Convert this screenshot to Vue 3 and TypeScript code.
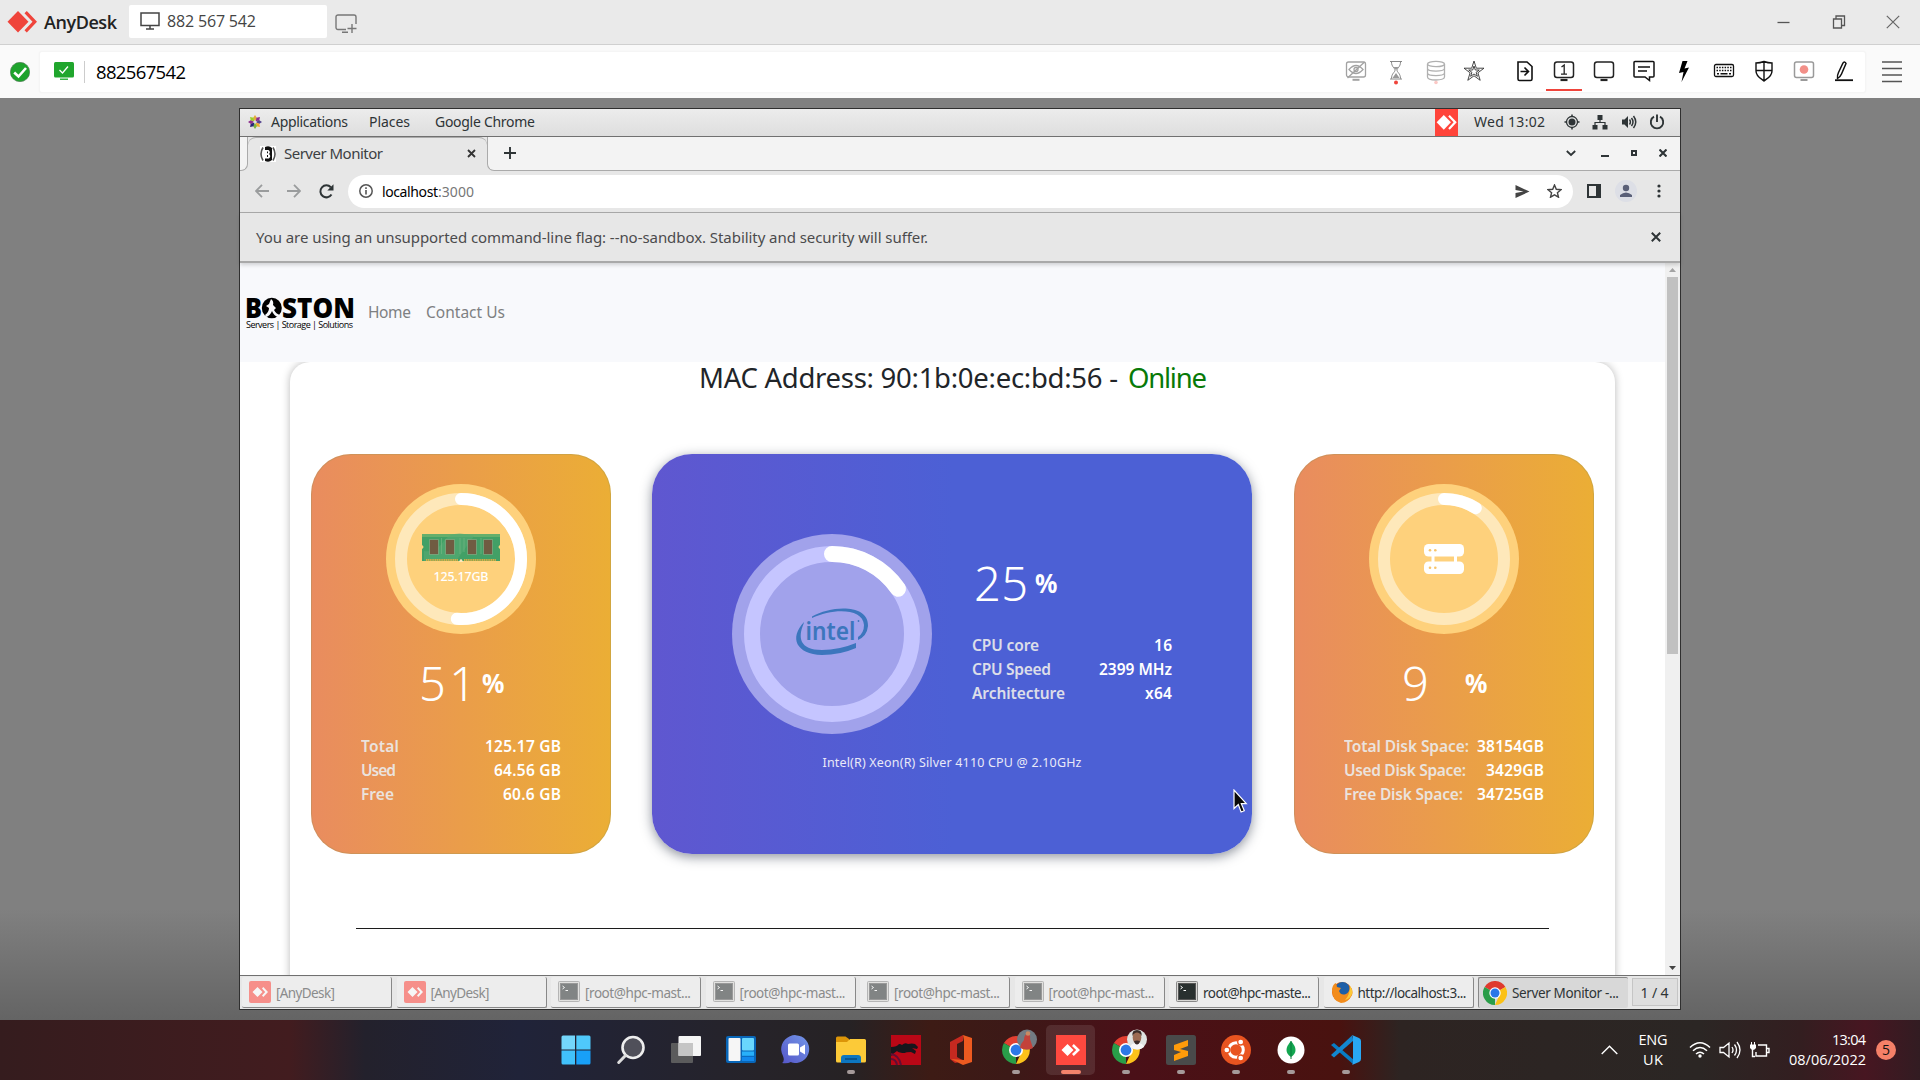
<script setup lang="ts">
interface Row { label: string; value: string; lw: number; vw: number }

// Stretches or tightens letter spacing so a label takes the given width.
const vFit = {
  mounted(el: HTMLElement, binding: { value: number }) {
    const chars = (el.textContent ?? '').length
    const natural = el.getBoundingClientRect().width
    if (chars < 2 || !binding.value) return
    const spacing = (binding.value - natural) / (chars - 1)
    el.style.letterSpacing = `${spacing}px`
    el.style.marginRight = `${-spacing}px`
  },
}

const memory: Row[] = [
  { label: 'Total', value: '125.17 GB', lw: 38, vw: 76 },
  { label: 'Used', value: '64.56 GB', lw: 35, vw: 67 },
  { label: 'Free', value: '60.6 GB', lw: 33, vw: 58 },
]
const cpu: Row[] = [
  { label: 'CPU core', value: '16', lw: 67, vw: 18 },
  { label: 'CPU Speed', value: '2399 MHz', lw: 79, vw: 73 },
  { label: 'Architecture', value: 'x64', lw: 93, vw: 27 },
]
const disk: Row[] = [
  { label: 'Total Disk Space:', value: '38154GB', lw: 125, vw: 67 },
  { label: 'Used Disk Space:', value: '3429GB', lw: 122, vw: 58 },
  { label: 'Free Disk Space:', value: '34725GB', lw: 119, vw: 67 },
]

const arc = (r: number, c: number, deg: number): string => {
  const a = (deg * Math.PI) / 180
  return `M${c} ${c - r}A${r} ${r} 0 ${deg > 180 ? 1 : 0} 1 ${c + r * Math.sin(a)} ${c - r * Math.cos(a)}`
}

const tasks = [
  { icon: 'any', text: '[AnyDesk]', dim: true, w: 59 },
  { icon: 'any', text: '[AnyDesk]', dim: true, w: 59 },
  { icon: 'term', text: '[root@hpc-mast...', dim: true, w: 106 },
  { icon: 'term', text: '[root@hpc-mast...', dim: true, w: 106 },
  { icon: 'term', text: '[root@hpc-mast...', dim: true, w: 106 },
  { icon: 'term', text: '[root@hpc-mast...', dim: true, w: 106 },
  { icon: 'term', text: 'root@hpc-maste...', dim: false, w: 108 },
  { icon: 'fox', text: 'http://localhost:3...', dim: false, w: 109 },
  { icon: 'chrome', text: 'Server Monitor -...', dim: false, w: 107, active: true },
]

const dock = ['start', 'search', 'views', 'widgets', 'chat', 'folder', 'dragon', 'office', 'chromeA', 'anydesk', 'chromeB', 'sublime', 'ubuntu', 'mongo', 'code']
const running = ['folder', 'chromeA', 'chromeB', 'sublime', 'ubuntu', 'mongo', 'code']
const petals = [0, 45, 90, 135, 180, 225, 270, 315]
const petalColors = ['#e6a93c', '#8d2f8d', '#56458f', '#f0a92e', '#7cb342', '#262577', '#8d2f8d', '#9ccd2a']
</script>

<template>
  <div class="screen">
    <header class="titlebar">
      <svg class="ad-logo" width="30" height="22" viewBox="0 0 30 22"><path d="M11 0 21.5 10.8 11 21.600 .5 10.8z" fill="#ef443b" /><path d="M17.500 2.300 19.800 0 30 10.800 19.800 21.600l-2.300-2.300 8-8.500z" fill="#ef443b" /></svg>
      <span v-fit="73" class="brand">AnyDesk</span>
      <div class="adtab">
        <svg width="20" height="18" viewBox="0 0 20 18" fill="none" stroke="#444"><path d="M1 1h18v12.500H1z" stroke-width="1.500" /><path d="M10 14v2.500M6 17h8" stroke-width="1.500" /></svg>
        <span v-fit="89">882 567 542</span>
      </div>
      <svg class="addmon" width="22" height="20" viewBox="0 0 22 20" fill="none" stroke="#777" stroke-width="1.400"><path d="M11 15.500H3a2 2 0 0 1-2-2V3a2 2 0 0 1 2-2h16a2 2 0 0 1 2 2v7M7 18.200h6M17 10v9M12.500 14.500h9" /></svg>
      <div class="winctl">
        <svg width="13" height="14" viewBox="0 0 13 14"><path d="M.5 7.500h12" stroke="#555" stroke-width="1.300" /></svg>
        <svg width="14" height="14" viewBox="0 0 14 14" fill="none" stroke="#555" stroke-width="1.300"><path d="M1.500 4h8v9h-8zM4 4V1h8.500v9.500h-3" /></svg>
        <svg width="14" height="14" viewBox="0 0 14 14"><path d="m.8.8 12.400 12.400M13.200.8.800 13.200" stroke="#666" stroke-width="1.200" /></svg>
      </div>
    </header>

    <div class="adbar">
      <svg class="okay" width="20" height="20" viewBox="0 0 20 20"><circle cx="10" cy="10" r="9.700" fill="#1ea32d" stroke="#4c7450" stroke-width=".6" /><path d="m4.200 10.500 4.300 4L16 6" fill="none" stroke="#fff" stroke-width="2.600" /></svg>
      <div class="adinput">
        <svg class="gmon" width="20" height="19" viewBox="0 0 20 19"><rect width="20" height="15.500" rx="1.500" fill="#20a62d" /><path d="M6 16.500h8v1.500H6z" fill="#35b543" /><path d="m5.500 8 3 3 5.500-6.500" fill="none" stroke="#fff" stroke-width="1.300" /></svg>
        <i class="sep" />
        <span v-fit="90" class="adnum">882567542</span>
        <div class="tools">
          <svg viewBox="0 0 24 24" stroke="#a2a2a2" stroke-width="1.300"><rect x="2.500" y="3" width="19" height="15" rx="2" /><path d="M8.500 20.800h7" stroke-width="2" /><path d="M5 10.500q7-8 14 0-7 8-14 0zM3.500 19 20.500 3" /><circle cx="12" cy="10.500" r="2" /></svg>
          <svg viewBox="0 0 24 24" stroke="#888"><path d="M6 2.500h12M6 20h12M7.500 3c0 5 3.500 6 3.500 8.200s-3.500 3-3.500 8.500M16.500 3c0 5-3.500 6-3.500 8.200s3.500 3 3.500 8.500" /><path d="m8.500 19 3.500-5 3.500 5zM9.500 8h5L12 11z" fill="#999" stroke="none" /><circle cx="12" cy="23.500" r="2" fill="#ef443b" stroke="none" /></svg>
          <svg viewBox="0 0 24 24" stroke="#b0b0b0" stroke-width="1.300"><ellipse cx="12" cy="5" rx="8.500" ry="2.700" /><path d="M3.500 5v13c0 4 17 4 17 0V5M3.500 9.500c0 3.500 17 3.500 17 0M3.500 14c0 3.500 17 3.500 17 0" /><circle cx="12" cy="23.500" r="1.800" fill="#fbc8c5" stroke="none" /></svg>
          <svg class="star" viewBox="0 0 24 24" stroke="#333" stroke-width=".9"><path d="m12 2 2.300 7.200H22l-6.100 4.600 2.300 7.500L12 16.800l-6.200 4.500 2.300-7.500L2 9.200h7.700z" /><path d="m12 7 1.300 4h4l-3.200 2.300 1.300 4L12 15l-3.400 2.300 1.300-4L6.700 11h4z" /></svg>
          <svg class="gap" viewBox="0 0 24 24" stroke="#111" stroke-width="1.600"><path d="M5 3h9l5 4.500V20a1.500 1.500 0 0 1-1.500 1.500h-11A1.500 1.500 0 0 1 5 20zM7.500 12.500H15m-3.500-4 4 4-4 4" /></svg>
          <span class="mon1"><svg viewBox="0 0 24 24" stroke="#222" stroke-width="1.500"><rect x="2.500" y="3" width="19" height="15.500" rx="2.500" /><path d="M8.500 21h7" stroke-width="2.200" /><path d="m9.500 8 2.700-2v9.500M9 15.200h6" stroke-width="1.300" /></svg></span>
          <svg viewBox="0 0 24 24" stroke="#222" stroke-width="1.500"><rect x="2.500" y="3" width="19" height="15.500" rx="2.500" /><path d="M8.500 21h7" stroke-width="2.200" /></svg>
          <svg viewBox="0 0 24 24" stroke="#111" stroke-width="1.500"><path d="M3 2.500h18a1 1 0 0 1 1 1V17a1 1 0 0 1-1 1h-3.500v3.500L13 18H3a1 1 0 0 1-1-1V3.500a1 1 0 0 1 1-1zM6 8h12M6 12h9" /></svg>
          <svg viewBox="0 0 24 24"><path d="M10.500 2h5l-3 7.500 4.500-1L9.500 23l2-10-4.500 1z" fill="#000" /></svg>
          <svg viewBox="0 0 24 24" stroke="#111" stroke-width="1.300"><rect x="2.500" y="5.500" width="19" height="12" rx="1.500" /><path d="M4.500 8.500h15M4.500 11.500h15" stroke-dasharray="1.500 1.200" stroke-width="1.600" /><path d="M5 14.700h2m1.500 0h7m1.500 0h2" stroke-width="1.500" /></svg>
          <svg viewBox="0 0 24 24" stroke="#111" stroke-width="1.400"><path d="M4 4q4 0 8-1.500Q16 4 20 4v8c0 6-6 8-8 10-2-2-8-4-8-10zM12 2.500V22M4 11.500h16" /></svg>
          <svg viewBox="0 0 24 24" stroke="#9a9a9a" stroke-width="1.500"><rect x="2.500" y="3" width="19" height="15.500" rx="2" /><path d="M8.500 21h7" stroke-width="2" /><circle cx="12" cy="10.500" r="4.300" fill="#f28f88" stroke="none" /></svg>
          <svg viewBox="0 0 24 24" stroke="#111" stroke-width="1.500"><path d="M3 21.200h18" stroke-width="1.800" /><path d="M5.500 19.500q-.5-3 1-6L11 4q2-2 3 .5L9.500 15q-1 2.500-4 4.500z" /></svg>
        </div>
      </div>
      <svg class="burger" width="20" height="22" viewBox="0 0 20 22"><path d="M0 1h20M0 7.500h20M0 14h20M0 20.500h20" stroke="#555" stroke-width="1.500" /></svg>
    </div>

    <main class="desk">
      <div class="remote">
        <div class="gpanel">
          <svg class="centos" width="14" height="14" viewBox="-7 -7 14 14"><path v-for="(p, i) in petals" :key="p" d="M0-1 2-4 0-7-2-4z" :fill="petalColors[i]" :transform="`rotate(${p})`" /></svg>
          <span v-fit="77" class="m1">Applications</span>
          <span v-fit="41" class="m2">Places</span>
          <span v-fit="100" class="m3">Google Chrome</span>
          <div class="gright">
            <div class="redbox"><svg width="21" height="15" viewBox="0 0 30 22" fill="#fff"><path d="M11 0 21.500 10.800 11 21.600.500 10.800z" /><path d="m17.500 2.300 2.300-2.300L30 10.800 19.800 21.600l-2.300-2.300 8-8.500z" /></svg></div>
            <span v-fit="71" class="clock">Wed 13:02</span>
            <svg class="target" width="16" height="16" viewBox="0 0 16 16"><circle cx="8" cy="8" r="5.500" fill="none" stroke="#2e3436" stroke-width="1.300" /><circle cx="8" cy="8" r="3.500" fill="#2e3436" /><path d="M8 .5V3m0 10v2.500M.5 8H3m10 0h2.500" stroke="#2e3436" stroke-width="1.500" /></svg>
            <svg width="16" height="16" viewBox="0 0 16 16" fill="#2e3436"><path d="M5.500 1h5v5h-5zM.5 11h5v4.500h-5zm10 0h5v4.500h-5z" /><path d="M8 6v2.500M3 11V8.500h10V11" fill="none" stroke="#2e3436" stroke-width="1.200" /></svg>
            <svg width="16" height="16" viewBox="0 0 16 16"><path d="M1 5.500h2.500L7 2v12l-3.500-3.500H1z" fill="#2e3436" /><path d="M8.500 5.500q1.800 2.500 0 5M10.500 4q3 4 0 8M12.500 2q4.500 6 0 12" fill="none" stroke="#2e3436" stroke-width="1.500" /></svg>
            <svg width="16" height="16" viewBox="0 0 16 16" fill="none" stroke="#2e3436" stroke-width="1.900"><path d="M5 2.700a6.200 6.200 0 1 0 6 0M8 .500V8" /></svg>
          </div>
        </div>

        <div class="tabstrip">
          <i class="stub" />
          <div class="tab">
            <svg class="fav" width="16" height="16" viewBox="0 0 16 16"><rect width="16" height="16" fill="#fff" /><path d="M3 1.500Q-1 8 3 14.500M13 1.500q4 6.500 0 13" fill="none" stroke="#555" stroke-width="1.600" /><path d="M5 1q4-2 7 1v12q-3 3-7 1z" fill="#111" /><path d="M5 4h3.500q2.500 2 .5 4 2.500 2 0 4.500H5zM7 5.500v1.700h1V5.500zM7 9v2h1V9z" fill="#fff" fill-rule="evenodd" /></svg>
            <span v-fit="99">Server Monitor</span>
            <svg class="tx" width="9" height="9" viewBox="0 0 9 9"><path d="m1 1 7 7M8 1 1 8" stroke="#333" stroke-width="1.800" /></svg>
          </div>
          <div class="strip">
            <svg class="plus" width="12" height="12" viewBox="0 0 12 12"><path d="M6 0v12M0 6h12" stroke="#2e3436" stroke-width="1.900" /></svg>
            <div class="chctl">
              <svg width="10" height="10" viewBox="0 0 10 10"><path d="m.8 3 4.200 4 4.200-4" fill="none" stroke="#2e3436" stroke-width="1.800" /></svg>
              <svg width="8" height="10" viewBox="0 0 8 10"><path d="M0 8h8" stroke="#2e3436" stroke-width="2" /></svg>
              <svg width="6" height="6" viewBox="0 0 6 6"><path d="M1 1h4v4H1z" fill="none" stroke="#2e3436" stroke-width="2" /></svg>
              <svg width="8" height="8" viewBox="0 0 8 8"><path d="m.500.500 7 7M7.500.500l-7 7" stroke="#2e3436" stroke-width="2.100" /></svg>
            </div>
          </div>
        </div>

        <div class="chbar">
          <svg width="14" height="14" viewBox="0 0 14 14" fill="none" stroke="#9a9c9d" stroke-width="1.800"><path d="M14 7H1.500M7 .8.9 7 7 13.200" /></svg>
          <svg width="14" height="14" viewBox="0 0 14 14" fill="none" stroke="#9a9c9d" stroke-width="1.800"><path d="M0 7h12.500M7 .8 13.100 7 7 13.200" /></svg>
          <svg width="15" height="15" viewBox="0 0 15 15"><path d="M12.500 10.500A6 6 0 1 1 11.800 3.300" fill="none" stroke="#2e3436" stroke-width="2" /><path d="M14.500.300v6.300H8.300z" fill="#2e3436" /></svg>
          <div class="url">
            <svg width="14" height="14" viewBox="0 0 14 14"><circle cx="7" cy="7" r="6.200" fill="none" stroke="#555" stroke-width="1.500" /><path d="M7 6v4.500M7 3.200V5" stroke="#555" stroke-width="1.600" /></svg>
            <span v-fit="56" class="host">localhost</span><span v-fit="36" class="port">:3000</span>
            <svg class="send" width="15" height="13" viewBox="0 0 15 13"><path d="M.500 0 14.500 6.500.500 13V8l8-1.500-8-1.500z" fill="#444" /></svg>
            <svg class="st" width="15" height="14" viewBox="0 0 15 14"><path d="m7.500 1 1.800 4.300 4.700.4-3.600 3 1.100 4.500-4-2.400-4 2.400 1.100-4.500-3.600-3 4.700-.400z" fill="none" stroke="#444" stroke-width="1.400" /></svg>
          </div>
          <svg class="side" width="14" height="14" viewBox="0 0 14 14"><path d="M0 0h14v14H0zM2 2v10h7V2z" fill="#2e3436" fill-rule="evenodd" /></svg>
          <svg class="prof" width="22" height="22" viewBox="0 0 22 22"><circle cx="11" cy="11" r="11" fill="#dddfe6" /><circle cx="11" cy="8" r="3.200" fill="#5a6078" /><path d="M5 17v-2q6-5 12 0v2z" fill="#5a6078" /></svg>
          <svg class="kebab" width="4" height="14" viewBox="0 0 4 14" fill="#2e3436"><circle cx="2" cy="2" r="1.600" /><circle cx="2" cy="7" r="1.600" /><circle cx="2" cy="12" r="1.600" /></svg>
        </div>

        <div class="info">
          <span v-fit="672">You are using an unsupported command-line flag: --no-sandbox. Stability and security will suffer.</span>
          <svg width="10" height="10" viewBox="0 0 10 10"><path d="m.8.8 8.400 8.400M9.200.8.800 9.200" stroke="#2e3436" stroke-width="2" /></svg>
        </div>

        <div class="view">
          <div class="page">
            <nav>
              <div class="logo">
                <svg width="108" height="24" viewBox="0 0 108 24" font-family="Open Sans" font-weight="800" font-size="27.500">
                  <text x="-1" y="21" textLength="17" lengthAdjust="spacingAndGlyphs">B</text>
                  <ellipse cx="25.800" cy="11" rx="10" ry="10.300" /><path d="M25 2q3 2 2 6l3 3-2 2q2 4 6 5l-2 2q-4-1-6-6-2 5-6 6l-1-2q4-3 4-7l-3-2 3-2z" fill="#f8f9fc" />
                  <text x="36" y="21" textLength="73" lengthAdjust="spacingAndGlyphs">STON</text>
                </svg>
                <span v-fit="107" class="tag">Servers | Storage | Solutions</span>
              </div>
              <span v-fit="43" class="home">Home</span>
              <span v-fit="79" class="contact">Contact Us</span>
            </nav>
            <section class="panel">
              <h1><span v-fit="419">MAC Address: 90:1b:0e:ec:bd:56 -</span><span v-fit="79" class="online">Online</span></h1>
              <div class="cards">
                <div class="card warm">
                  <div class="dial">
                    <svg width="150" height="150"><circle cx="75" cy="75" r="75" fill="#fed17c" /><circle cx="75" cy="75" r="60" fill="none" stroke="#fee8ba" stroke-width="12" /><path :d="arc(60, 75, 184)" fill="none" stroke="#fff" stroke-width="12" stroke-linecap="round" />
                      <path d="M36 50h78v11q-3 2 0 4v12H36V65q3-2 0-4z" fill="#42a066" /><path d="M36 50h78v3H36z" fill="#65af6c" /><path d="M38 67q12 2 20-10t30-5L70 77H38z" fill="#56aa73" opacity=".6" />
                      <g fill="#705c42" stroke="#8cc39a" stroke-width=".5"><path d="M43.500 55.500h9v15h-9zM59.500 55.500h9v15h-9zM81.500 55.500h9v15h-9zM97.500 55.500h9v15h-9z" /></g>
                      <path d="M40 76h32m6 0h32" stroke="#d6ad45" stroke-width="2" stroke-dasharray="1.300 .5" /><path d="M73 78q2-6 4 0z" fill="#fee8ba" /><path d="M55.500 54v16M74 54v16m4-16v14m17-14v16" stroke="#79b886" stroke-width=".6" />
                    </svg>
                    <span v-fit="55" class="ramtext">125.17GB</span>
                  </div>
                  <div class="num"><i><span v-fit="57">51</span></i><b>%</b></div>
                  <ul><li v-for="r in memory" :key="r.label"><span v-fit="r.lw">{{ r.label }}</span><b v-fit="r.vw">{{ r.value }}</b></li></ul>
                </div>
                <div class="card cool">
                  <div class="coolrow">
                    <svg width="200" height="200"><circle cx="100" cy="100" r="100" fill="#a1a2eb" /><circle cx="100" cy="100" r="80" fill="none" stroke="#c5c5ff" stroke-width="16" /><path :d="arc(80, 100, 55.6)" fill="none" stroke="#fff" stroke-width="16" stroke-linecap="round" />
                      <path d="M80 82.500C100 71 137 70 136 92q-1 10-10 14v-3q6-4 6-12C131 74 101 74 80 84z" fill="#3c76bd" />
                      <path d="M72 88C57 104 64 120 90 121q18 0 34-7v-5q-17 7-34 7C67 116 66 103 71.500 90z" fill="#3c76bd" />
                      <text x="73.500" y="105.500" font-size="26" font-weight="600" fill="#3c76bd" font-family="Noto Sans" textLength="50" lengthAdjust="spacingAndGlyphs">intel</text><circle cx="126.500" cy="87" r=".9" fill="#3c76bd" />
                    </svg>
                    <div class="stats">
                      <div class="num"><i><span v-fit="54">25</span></i><b>%</b></div>
                      <ul><li v-for="r in cpu" :key="r.label"><span v-fit="r.lw">{{ r.label }}</span><b v-fit="r.vw">{{ r.value }}</b></li></ul>
                    </div>
                  </div>
                  <span v-fit="259" class="model">Intel(R) Xeon(R) Silver 4110 CPU @ 2.10GHz</span>
                </div>
                <div class="card warm">
                  <div class="dial">
                    <svg width="150" height="150"><circle cx="75" cy="75" r="75" fill="#fed17c" /><circle cx="75" cy="75" r="60" fill="none" stroke="#fee8ba" stroke-width="12" /><path :d="arc(60, 75, 32)" fill="none" stroke="#fff" stroke-width="12" stroke-linecap="round" />
                      <g fill="#fff"><rect x="55" y="60" width="40" height="12.500" rx="4.500" /><rect x="55" y="77.500" width="40" height="12.500" rx="4.500" /><path d="M62.500 72h3v6h-3zm22.500 0h3v6h-3z" /></g>
                      <g fill="#f7c56c"><circle cx="61" cy="66.300" r="1.300" /><circle cx="66.300" cy="66.300" r="1.300" /><circle cx="61" cy="83.700" r="1.300" /><circle cx="66.300" cy="83.700" r="1.300" /></g>
                    </svg>
                  </div>
                  <div class="num"><i><span>9</span></i><b>%</b></div>
                  <ul><li v-for="r in disk" :key="r.label"><span v-fit="r.lw">{{ r.label }}</span><b v-fit="r.vw">{{ r.value }}</b></li></ul>
                </div>
              </div>
              <hr>
            </section>
          </div>
          <div class="scroll">
            <svg width="15" height="13" viewBox="0 0 15 13"><path d="M4 9h7L7.500 5z" fill="#a3a3a3" /></svg>
            <div class="thumb" />
            <svg class="dn" width="15" height="15" viewBox="0 0 15 15"><path d="M4 6h7l-3.500 4z" fill="#444" /></svg>
          </div>
        </div>

        <div class="tasks">
          <div v-for="(t, i) in tasks" :key="i" class="task" :class="{ dim: t.dim, active: t.active }">
            <svg v-if="t.icon === 'any'" width="22" height="22" viewBox="0 0 22 22"><rect width="22" height="22" rx="2" fill="#ff443b" /><path d="m8.500 6 5 5-5 5-5-5zM13 7.500l1.300-1.500L19 11l-4.700 5-1.300-1.500 3.200-3.500z" fill="#fff" /></svg>
            <svg v-else-if="t.icon === 'term'" width="22" height="22" viewBox="0 0 22 22"><rect x=".5" y=".5" width="21" height="20" rx="1" fill="#d8d8d5" stroke="#888" /><rect x="2.500" y="2.500" width="17" height="16" fill="#29302f" stroke="#555" /><path d="m4.500 5 2 1.500-2 1.500M7.500 9.500H10" fill="none" stroke="#fff" /></svg>
            <svg v-else-if="t.icon === 'fox'" width="22" height="22" viewBox="0 0 22 22"><circle cx="11" cy="11" r="10" fill="#e66000" /><circle cx="11.500" cy="8.500" r="7.500" fill="#1d5fa8" /><path d="M1 8Q2 3 5 2l1 4 4 1-2 3q2 5 7 3 5-3 3-9 5 5 3 10-4 8-11 8Q1 20 1 8z" fill="#f28c1c" /><path d="M19 5q3 4 2 8-2 5-7 6 5-5 5-14z" fill="#fcc838" /></svg>
            <svg v-else width="24" height="24" viewBox="0 0 24 24"><path d="M12 12 1.600 6A12 12 0 0 1 22.400 6z" fill="#df3a2e" /><path d="M12 12v12A12 12 0 0 1 1.600 6z" fill="#2a9d48" /><path d="M12 12 22.400 6A12 12 0 0 1 12 24l4-9z" fill="#fbc116" /><circle cx="12" cy="12" r="5.700" fill="#fff" /><circle cx="12" cy="12" r="4.500" fill="#2b77e8" /></svg>
            <span v-fit="t.w">{{ t.text }}</span>
          </div>
          <div class="pager"><span v-fit="28">1 / 4</span></div>
        </div>
      </div>
    </main>

    <footer class="win">
      <div class="dock">
        <div v-for="d in dock" :key="d" class="app" :class="{ on: d === 'anydesk' }">
          <svg width="32" height="32" viewBox="0 0 32 32">
            <g v-if="d === 'start'"><path d="M1.500 3q0-1.500 1.500-1.500h12V15.400H1.500z" fill="#74d6fb" /><path d="M16.300 1.500H29q1.500 0 1.500 1.500v12.400H16.300z" fill="#4fc9fb" /><path d="M1.500 16.600H15v14H3q-1.500 0-1.500-1.500z" fill="#41c1fb" /><path d="M16.300 16.600h14.200v12.500q0 1.500-1.500 1.500H16.300z" fill="#18a0f8" /></g>
            <g v-else-if="d === 'search'" fill="none"><circle cx="18" cy="13.500" r="10.500" fill="#50505a" stroke="#eee" stroke-width="2.600" /><path d="m10.500 21.500-6.800 7" stroke="#ddd" stroke-width="3" stroke-linecap="round" /></g>
            <g v-else-if="d === 'views'"><rect x="1" y="9" width="22" height="20" rx="1" fill="#5b5b5c" /><rect x="8.500" y="2" width="22.500" height="20" rx="1" fill="#f5f5f5" /><path d="M8.500 9H23v13H8.500z" fill="#c5c5c5" /></g>
            <g v-else-if="d === 'widgets'"><rect x="1" y="2" width="30" height="27" rx="2" fill="#0866b8" /><rect x="3.500" y="4" width="12" height="23" rx="1" fill="#f6f6f6" /><rect x="17" y="4" width="12" height="12.500" rx="1" fill="#69d7fd" /><rect x="17" y="17.500" width="12" height="4.300" fill="#28b0fa" /><rect x="17" y="22.800" width="12" height="4.200" fill="#1288ed" /></g>
            <g v-else-if="d === 'chat'"><path d="M2 29q3-2 1-7A14 14 0 1 1 17 29q-5 0-6-1-4 2-9 1z" fill="url(#cg)" /><defs><linearGradient id="cg" x1="1" x2="0" y1="0" y2="1"><stop stop-color="#7397e8" /><stop offset="1" stop-color="#5555c8" /></linearGradient></defs><rect x="8" y="9.500" width="11" height="12" rx="1.500" fill="#fff" /><path d="m20 13.500 5-3v10l-5-3z" fill="#fff" /></g>
            <g v-else-if="d === 'folder'"><path d="M1 4q0-1.500 1.500-1.500h8L14 5v5H1z" fill="#dc9508" /><path d="M1 8h11l3-3h14.500q1.500 0 1.500 1.500V27q0 1.500-1.500 1.500h-27Q1 28.500 1 27z" fill="#fcca38" /><path d="M6 29v-5q0-3 3-3h14q3 0 3 3v5z" fill="#0d76bf" /><path d="M10 25h12" stroke="#064b80" stroke-width="1.500" /></g>
            <g v-else-if="d === 'dragon'"><path d="M1 1h30v30H1z" fill="#b90716" /><path d="M1 13q6 0 8-3 2 0 3 1 3-3 6-1 4-1 7 0l3 3-1 2-5-1 4 3-1 3-4-2q-5 0-6 1-6 0-8-2l-4 3q-1 3-2 1z" fill="#16161c" /><path d="M1 20q8 1 10 11M1 25q5 0 6 6" stroke="#630d34" stroke-width="2" fill="none" /></g>
            <g v-else-if="d === 'office'"><path d="m5 8 13-7v6l-6 3v13l7 4-9 2-5-4z" fill="#c62920" /><path d="M18 1l9 3v24l-9 3-12-6 13 1V7z" fill="#ed5a20" /></g>
            <g v-else-if="d === 'chromeA' || d === 'chromeB'"><g transform="translate(2 2)"><path d="M14 14 1.900 7a14 14 0 0 1 24.200 0z" fill="#e33f31" /><path d="M14 14v14A14 14 0 0 1 1.900 7z" fill="#299e49" /><path d="M14 14 26 7a14 14 0 0 1-12 21l5-11z" fill="#fcc21a" /><circle cx="14" cy="14" r="7" fill="#fff" /><circle cx="14" cy="14" r="5.400" fill="#2c78e8" /></g></g>
            <g v-else-if="d === 'anydesk'"><path d="M1 1h30v30H1z" fill="#ff493f" /><path d="m12.500 10 6 6-6 6-6-6zM17 12l1.800-2 6.200 6-6.200 6-1.800-2 4.200-4z" fill="#fff" /></g>
            <g v-else-if="d === 'sublime'"><rect x="1" y="1" width="30" height="30" rx="2.500" fill="#494a4a" /><path d="m9 11 14-5v6l-8 3 8 2v5L9 27v-6l7-3-7-2z" fill="#ff9b0a" /></g>
            <g v-else-if="d === 'ubuntu'" fill="none"><circle cx="16" cy="16" r="15" fill="#e95420" /><circle cx="16" cy="16" r="7.300" stroke="#fff" stroke-width="3" /><g fill="#fff" stroke="#e95420" stroke-width="1.300"><circle cx="6.800" cy="16" r="3" /><circle cx="20.700" cy="8" r="3" /><circle cx="20.700" cy="24" r="3" /></g></g>
            <g v-else-if="d === 'mongo'"><circle cx="16" cy="16" r="13.500" fill="#fff" /><path d="M16 7q9 10 0 16-9-6 0-16z" fill="#13a650" /><path d="M16 7v18" stroke="#0b7a3c" /></g>
            <g v-else><path d="m1 11 3-2 20 17-1 4z" fill="#087cc4" /><path d="M1 21 22 1.500l1.500 5L4 23.500z" fill="#1387d0" /><path d="m22 1 7 3q2 1 2 3v18q0 2-2 3l-7 3q1-1 1-4V5q0-3-1-4z" fill="#29a8f3" /></g>
          </svg>
          <svg v-if="d === 'chromeA'" class="avatar" width="20" height="21" viewBox="0 0 20 21"><circle cx="10" cy="10.500" r="10" fill="#727b83" /><path d="M3 19q1-5 4-8 0-5 3-6 4 0 3 5l3 9q-6 3-13 0z" fill="#c3423a" /><circle cx="11" cy="4.500" r="2.300" fill="#c98a62" /></svg>
          <svg v-if="d === 'chromeB'" class="avatar" width="20" height="21" viewBox="0 0 20 21"><circle cx="10" cy="10.500" r="10" fill="#dfe3e1" /><path d="M3 18q1-4 7-4t7 4q-6 5-14 0z" fill="#f6f6f6" /><ellipse cx="10" cy="8.500" rx="4.300" ry="6.200" fill="#9c6b52" /><path d="M5.500 7q-1-6 4.500-6t4.500 6Q13 3.500 10 3.500T5.500 7zM7 12q3-1 6 0-1 3.500-3 3.500T7 12z" fill="#3a2c28" /></svg>
          <i v-if="running.includes(d)" class="dot" /><i v-if="d === 'anydesk'" class="dot wide" />
        </div>
      </div>
      <div class="tray">
        <svg class="chev" width="17" height="10" viewBox="0 0 17 10"><path d="m.700 9 7.800-7.800L16.300 9" fill="none" stroke="#fff" stroke-width="1.400" /></svg>
        <div class="lang"><span v-fit="29">ENG</span><span v-fit="20">UK</span></div>
        <svg class="wifi" width="22" height="18" viewBox="0 0 22 18" fill="none" stroke="#fff" stroke-width="1.500"><path d="M1 6.500q10-9.500 20 0M4 9.800q7-6.500 14 0M7 13q4-3.500 8 0" /><circle cx="11" cy="15" r="1.700" fill="#fff" stroke="none" /></svg>
        <svg class="vol" width="22" height="20" viewBox="0 0 22 20" fill="none" stroke="#fff" stroke-width="1.300"><path d="M1 7.500h3.500L10 3v14l-5.500-4.500H1zM13 7q2 3 0 6M15.500 4.500q4 5.500 0 11M18 2q6 8 0 16" /></svg>
        <svg class="bat" width="22" height="18" viewBox="0 0 22 18" fill="none" stroke="#fff" stroke-width="1.400"><path d="M9 4h8.500v11H7V11M3.500 8v7.500H6M17.500 7.500H20v4h-2.500" /><path d="M1 3.500h6V7q-3 4-6 0zM2 1h1v3H2zM5 1h1v3H5z" fill="#fff" stroke="none" /></svg>
        <div class="time"><span v-fit="34">13:04</span><span v-fit="77">08/06/2022</span></div>
        <span class="badge">5</span>
      </div>
    </footer>

    <svg class="cursor" width="17" height="25" viewBox="0 0 17 25"><path d="M1 1v18.500l4.300-4 2.800 7.500 3.200-1.300-3-7h5z" fill="#0a0a0a" stroke="#fff" stroke-width="1.200" /></svg>
  </div>
</template>

<style>
body { margin: 0; overflow: hidden; }
</style>

<style scoped>
* { box-sizing: border-box; }
svg { flex: none; display: block; }
span { white-space: nowrap; }
.screen { width: 1920px; height: 1080px; display: flex; flex-direction: column; position: relative; overflow: hidden; font-family: "Noto Sans", "Open Sans", sans-serif; }
.titlebar { height: 45px; flex: none; display: flex; align-items: center; background: #eaeaea; border-bottom: 1px solid #d0d0d0; padding-left: 7px; font-family: "Open Sans", sans-serif; color: #222; }
.brand { margin-left: 7px; font-size: 18px; font-weight: 600; }
.adtab { margin: 0 0 1px 12px; width: 198px; height: 33px; border-radius: 2px; background: #fff; display: flex; align-items: center; gap: 7px; padding-left: 11px; color: #444; font-size: 16px; }
.adtab svg { margin-top: -2px; }
.adtab span { margin-top: -1px; }
.addmon { margin: 4px 0 0 8px; }
.winctl { margin-left: auto; display: flex; align-items: center; gap: 41px; padding-right: 20px; }
.winctl svg:first-child { margin-right: 1px; }
.winctl svg:nth-child(2) { margin-right: -1px; }
.adbar { height: 53px; flex: none; display: flex; align-items: center; background: #fafafa; padding-left: 10px; }
.adinput { margin: 0 0 0 10px; width: 1825px; height: 40px; background: #fff; box-shadow: 0 0 0 1.500px #f5f5f5; display: flex; align-items: center; padding-left: 14px; border-radius: 2px; }
.sep { width: 1px; height: 22px; background: #ccc; margin: 0 11px 0 10px; }
.adnum { font: 18.500px "Open Sans", sans-serif; color: #000; }
.tools { margin-left: auto; display: flex; height: 40px; }
.tools svg { width: 24px; height: 24px; margin: 7px 8px 0; fill: none; overflow: visible; }
.tools .star { margin-left: 6px; margin-right: 14px; }
.tools .gap { margin-left: 13px; }
.mon1 { height: 39px; box-shadow: inset 0 -2px #ef443b; width: 36px; margin: 0 2px 0 1px; }
.mon1 svg { margin-left: 6px; }
.tools svg:last-child { margin-right: 9px; }
.burger { margin-left: 17px; }
.desk { height: 922px; flex: none; background: linear-gradient(#808080 88%, #646464 100%); padding: 10px 0 0 239px; }
.remote { width: 1442px; height: 902px; border: 1px solid #2f2f2f; background: #fff; display: flex; flex-direction: column; }
.gpanel { height: 28px; flex: none; display: flex; align-items: center; background: linear-gradient(#ececec, #dedede); border-bottom: 1px solid #707070; padding: 0 0 1px 8px; color: #2e3436; font-size: 14px; }
.gpanel span { padding-bottom: 1px; }
.m1 { margin-left: 9px; }
.m2 { margin-left: 21px; }
.m3 { margin-left: 25px; }
.gright { margin-left: auto; display: flex; align-items: center; gap: 12.500px; padding-right: 15px; height: 27px; }
.redbox { width: 23px; height: 27px; background: #ff443a; display: grid; place-items: center; margin: 1px 3px 0 0; }
.target { margin-left: 6px; }
.tabstrip { height: 34px; flex: none; display: flex; background: #e7e7e7; }
.stub { width: 8px; background: #f3f3f3; border-right: 1px solid #aaa; border-bottom: 1px solid #aaa; border-bottom-right-radius: 7px; }
.tab { width: 239px; display: flex; align-items: center; padding: 0 11px 2px 12px; border-top: 1px solid #aaa; border-radius: 8px 8px 0 0; background: #e7e7e7; font-size: 15px; color: #3c4043; }
.tab span { padding-bottom: 1px; }
.fav { margin-right: 8px; }
.tx { margin-left: auto; }
.strip { flex: 1; background: #f3f3f3; border-left: 1px solid #aaa; border-bottom: 1px solid #aaa; border-bottom-left-radius: 7px; display: flex; align-items: center; padding: 0 13px 1px 16px; }
.chctl { margin-left: auto; display: flex; align-items: center; gap: 25px; }
.chctl svg:nth-child(3) { margin: 0 -2px 0 -3px; }
.chctl svg:nth-child(4) { margin-left: -1px; }
.chbar { height: 42px; flex: none; display: flex; align-items: center; gap: 18px; border-bottom: 1px solid #aaa; background: #e7e7e7; padding: 0 0 1px 15px; }
.url { width: 1225px; margin-left: -4px; height: 33px; border-radius: 17px; background: #fff; display: flex; align-items: center; padding: 0 11px; font-size: 14px; }
.host { margin-left: 9px; color: #000; }
.port { color: #777; }
.send { margin-left: auto; margin-right: 17px; }
.side { margin-left: -4px; }
.prof { margin-left: -4px; }
.kebab { margin-left: 2px; }
.info { height: 50px; flex: none; display: flex; align-items: center; justify-content: space-between; background: #e7e7e7; border-bottom: 2px solid #a9a9a9; padding: 0 19px 0 16px; font-size: 15px; color: #4b4b4d; position: relative; box-shadow: 0 2px 4px rgba(0, 0, 0, .16); z-index: 2; }
.view { height: 712px; flex: none; display: flex; }
.page { width: 1425px; overflow: hidden; display: flex; flex-direction: column; }
nav { height: 99px; flex: none; background: #f8f9fc; display: flex; align-items: center; padding: 0 0 2px 6px; font-size: 15.500px; color: #7e8082; position: relative; z-index: 1; }
.logo { width: 108px; height: 36px; display: flex; flex-direction: column; color: #000; margin-top: 7px; }
.logo svg { overflow: visible; }
.tag { font: 9px/10px "Open Sans", sans-serif; align-self: flex-start; margin-top: -1px; }
.home { margin-left: 14px; }
.contact { margin-left: 15px; }
.panel { margin-left: 50px; width: 1325px; height: 760px; flex: none; border-radius: 20px; box-shadow: 0 0 8px rgba(0, 0, 0, .28); }
h1 { margin: 0; height: 92px; padding-left: 409px; font-size: 27.500px; font-weight: 400; line-height: 32px; color: #212529; display: flex; }
.online { color: #087a08; margin-left: 10px; }
.cards { display: flex; padding-left: 21px; gap: 41px; }
.cards > :last-child { margin-left: 1px; }
.card { height: 400px; border-radius: 40px; flex: none; color: #fff; }
.warm { width: 300px; background: linear-gradient(90deg, #e98c5f, #ebae35); padding-top: 30px; box-shadow: inset 0 0 0 1px rgba(150, 150, 90, .3); }
.cool { width: 600px; background: linear-gradient(90deg, #5f57d0, #4c60d5 50%); padding-top: 80px; box-shadow: 0 3px 12px rgba(30, 40, 60, .5); display: flex; flex-direction: column; align-items: center; }
.dial { width: 150px; height: 150px; margin: 0 auto; position: relative; display: flex; justify-content: center; }
.ramtext { position: absolute; top: 85px; font-size: 12.500px; line-height: 16px; font-weight: 500; }
.num { margin: 24px 0 0 108px; height: 50px; display: flex; align-items: center; font-size: 47px; font-weight: 350; line-height: 50px; }
.num i { font-style: normal; width: 57px; flex: none; display: flex; }
.num b { font-size: 27px; font-weight: 700; margin-left: 6px; transform: scaleX(.92); transform-origin: left; }
ul { list-style: none; margin: 26px auto 0; padding: 0; width: 200px; font-size: 15.500px; font-weight: 600; }
li { height: 24px; display: flex; justify-content: space-between; align-items: center; }
li span { color: #ececec; opacity: .9; }
li b { font-weight: 600; }
.coolrow { display: flex; gap: 40px; width: 440px; }
.stats { width: 200px; }
.stats .num { margin: 24px 0 0 2px; }
.stats .num i { width: 55px; }
.stats ul { margin-top: 25px; }
.model { margin-top: 18px; font-size: 12.500px; line-height: 22px; color: #e9e9f8; }
hr { width: 1193px; height: 1px; border: 0; background: #1c1c1c; margin: 74px 0 0 66px; }
.scroll { width: 15px; background: #f0f0f0; display: flex; flex-direction: column; align-items: center; }
.thumb { width: 11px; height: 377px; background: #c1c1c1; margin-top: 1px; }
.dn { margin-top: auto; }
.tasks { height: 34px; flex: none; display: flex; gap: 4.500px; border-top: 1px solid #707070; background: #e7e7e7; padding: 1px 0 1px 2px; }
.task { width: 150px; height: 31px; display: flex; align-items: center; gap: 5px; background: #ededed; border-right: 1px solid #888; border-bottom: 1px solid #888; border-radius: 2px; padding-left: 7px; color: #2e3436; font-size: 13.500px; }
.task span { padding-top: 2px; }
.dim svg { opacity: .55; }
.dim { color: #8a8b8b; }
.active { background: #d8d8d8; border: 0; border-top: 1px solid #888; border-left: 1px solid #888; padding-left: 4px; }
.active span { padding-top: 0; }
.pager { width: 46px; height: 28px; margin: 1px 0 0 -1px; border: 1px solid #c5c5c5; background: #dedede; display: grid; place-items: center; font-size: 14px; color: #2e3436; }
.win { height: 60px; flex: none; display: flex; background: linear-gradient(90deg, #351c1e 0, #421c1f 290px, #23212c 365px, #202339 520px, #262329 760px, #262224 850px, #3d1b15 930px, #3c1917 1010px, #4a1018 1130px, #49120f 1340px, #2d2422 1400px, #2b2624 1700px, #331e20 1800px, #471621 1865px, #321c22 1920px); }
.dock { display: flex; padding-left: 548px; }
.app { width: 55.040px; height: 60px; display: flex; justify-content: center; padding-top: 14px; position: relative; }
.on::before { content: ""; position: absolute; left: 3px; top: 5px; width: 49px; height: 50px; border-radius: 5px; background: rgba(255, 255, 255, .1); }
.on svg { position: relative; }
.dot { position: absolute; bottom: 6px; width: 8px; height: 4px; border-radius: 2px; background: #a59a9a; }
.wide { width: 20px; background: #f4836b; }
.avatar { position: absolute; left: 29px; top: 9px; }
.tray { margin-left: auto; display: flex; align-items: center; color: #fff; font: 14.500px/20px "Open Sans", sans-serif; padding-right: 24px; }
.lang { display: flex; flex-direction: column; align-items: center; width: 30px; margin: 0 21px 0 20px; }
.vol { margin-left: 8px; }
.bat { margin-left: 8px; }
.time { display: flex; flex-direction: column; align-items: flex-end; margin: 0 10px 0 18px; }
.badge { width: 20px; height: 20px; border-radius: 50%; background: #f58068; color: #111; text-align: center; font-size: 14px; }
.cursor { position: absolute; left: 1233px; top: 789px; }
</style>
